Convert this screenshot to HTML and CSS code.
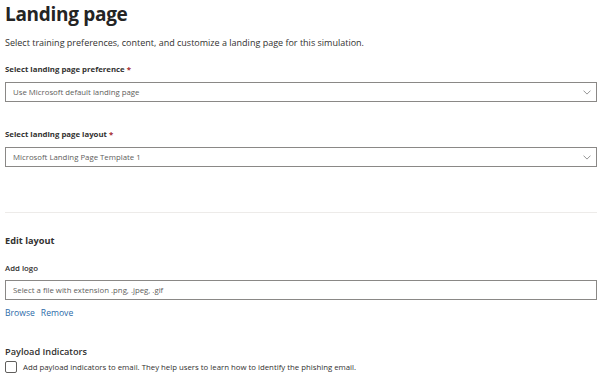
FILE: index.html
```html
<!DOCTYPE html>
<html>
<head>
<meta charset="utf-8">
<link rel="stylesheet" href="styles.css">
</head>
<body>
<div class="page">
  <h1 class="title">Landing page</h1>
  <p class="subtitle">Select training preferences, content, and customize a landing page for this simulation.</p>

  <div class="field field-first">
    <div class="label">Select landing page preference <span class="req">*</span></div>
    <div class="select">
      <span class="select-text">Use Microsoft default landing page</span>
      <svg class="chev" width="8" height="5" viewBox="0 0 8 5"><path d="M0.5 0.6 L4 4.1 L7.5 0.6" fill="none" stroke="#8a8a8a" stroke-width="0.9"/></svg>
    </div>
  </div>

  <div class="field field-second">
    <div class="label">Select landing page layout <span class="req">*</span></div>
    <div class="select">
      <span class="select-text">Microsoft Landing Page Template 1</span>
      <svg class="chev" width="8" height="5" viewBox="0 0 8 5"><path d="M0.5 0.6 L4 4.1 L7.5 0.6" fill="none" stroke="#8a8a8a" stroke-width="0.9"/></svg>
    </div>
  </div>

  <hr class="divider">

  <h2 class="section">Edit layout</h2>

  <div class="field field-logo">
    <div class="label label-light">Add logo</div>
    <div class="select input">
      <span class="select-text">Select a file with extension .png, .jpeg, .gif</span>
    </div>
  </div>

  <div class="links">
    <a class="link">Browse</a>
    <a class="link">Remove</a>
  </div>

  <h3 class="subsection">Payload Indicators</h3>
  <label class="check">
    <span class="box"></span>
    <span class="check-text">Add payload indicators to email. They help users to learn how to identify the phishing email.</span>
  </label>
</div>
</body>
</html>
```

FILE: styles.css
```css
* { box-sizing: border-box; }
html, body { margin: 0; padding: 0; background: #fff; }
body {
  font-family: "Open Sans", "Liberation Sans", sans-serif;
  color: #323130;
  width: 602px;
  height: 380px;
  overflow: hidden;
}
.page { padding: 0 5px; }
.title {
  margin: 0;
  padding-top: 1px;
  font-size: 19px;
  line-height: 26px;
  font-weight: 700;
  color: #242424;
  letter-spacing: -0.3px;
}
.subtitle {
  margin: 10px 0 0;
  font-size: 9px;
  line-height: 12px;
  color: #323130;
}
.field-first { margin-top: 15px; }
.field-second { margin-top: 27px; }
.label {
  font-size: 7.8px;
  font-weight: 700;
  line-height: 10px;
  color: #323130;
  margin-bottom: 8px;
}
.req { color: #a4262c; }
.select {
  height: 20px;
  border: 1px solid #8a8886;
  display: flex;
  align-items: center;
  justify-content: space-between;
  padding: 0 4px 0 7px;
}
.select-text {
  font-size: 7.8px;
  color: #605e5c;
}
.chev { margin-right: 1px; }
.divider {
  margin: 45px 0 0;
  border: 0;
  border-top: 1px solid #edebe9;
}
.section {
  margin: 22px 0 0;
  font-size: 9.2px;
  line-height: 12px;
  font-weight: 700;
  color: #323130;
}
.field-logo { margin-top: 16px; }
.label-light { font-weight: 600; margin-bottom: 7px; }
.input { border-color: #8a8886; }
.links {
  margin-top: 7px;
  display: flex;
  gap: 6px;
  font-size: 8.6px;
  line-height: 12px;
}
.link { color: #2b6aa8; }
.subsection {
  margin: 27px 0 0;
  font-size: 9.2px;
  line-height: 12px;
  font-weight: 600;
  color: #323130;
}
.check {
  margin-top: 3px;
  display: flex;
  align-items: center;
  gap: 6px;
}
.box {
  width: 12px;
  height: 12px;
  border: 1px solid #605e5c;
  border-radius: 2px;
}
.check-text { font-size: 7.8px; color: #323130; }
```
